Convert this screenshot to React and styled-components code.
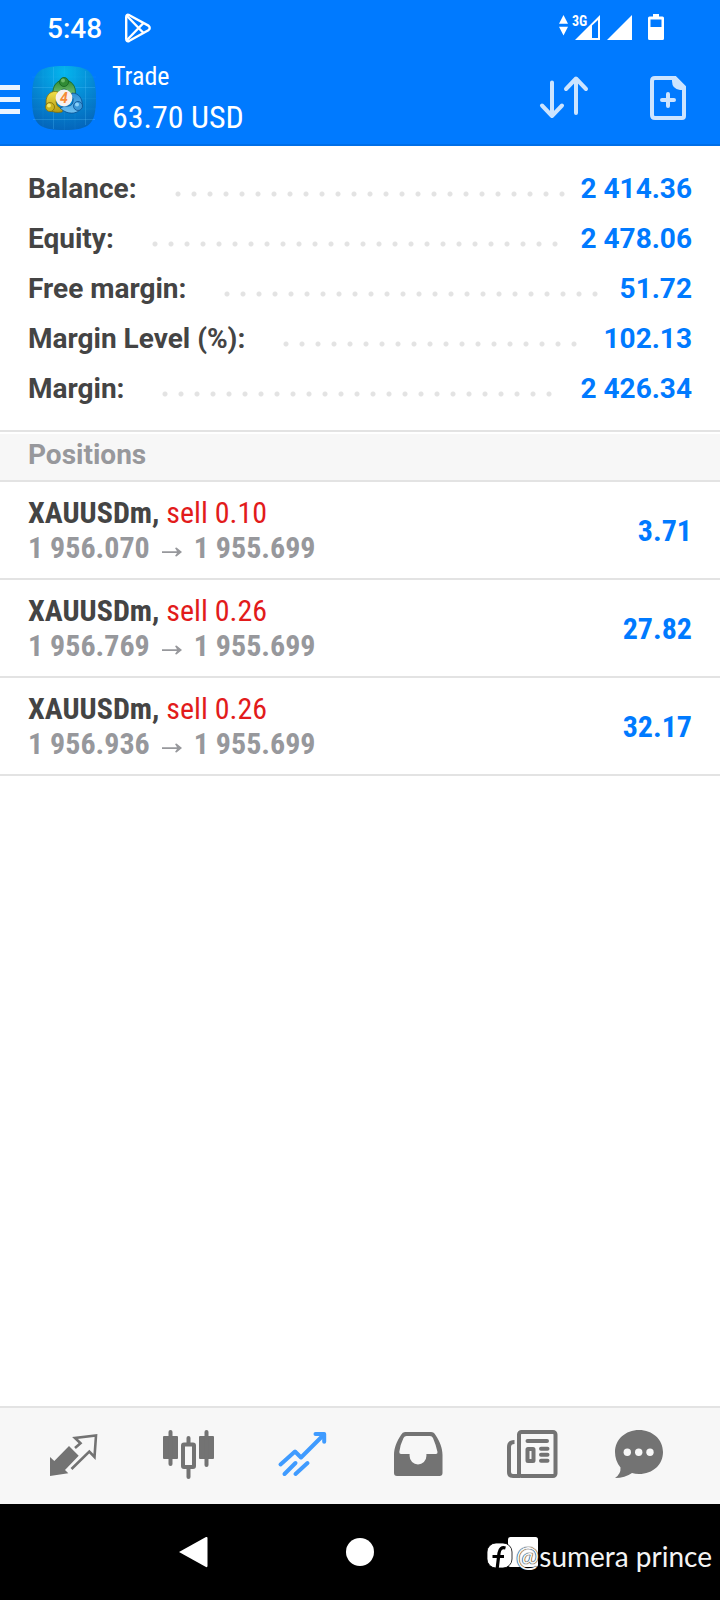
import styled, {createGlobalStyle} from "styled-components";

const GlobalStyle = createGlobalStyle`
  * {
    box-sizing: border-box;
  }
  body {
    margin: 0;
    background: #ffffff;
    font-family: Roboto, "Noto Sans", sans-serif;
  }
  button {
    padding: 0;
    border: none;
    background: none;
    cursor: pointer;
  }
  svg {
    display: block;
  }
`;

const Screen = styled.div`
  min-height: 100vh;
  display: flex;
  flex-direction: column;
`;

const Top = styled.header`
  background: #007aff;
  color: #ffffff;
  border-bottom: 2px solid #006fe8;
`;

const StatusBar = styled.div`
  height: 56px;
  padding: 0 55px 0 47px;
  display: flex;
  align-items: center;
  justify-content: space-between;
`;

const StatusGroup = styled.div`
  display: flex;
  align-items: center;
  gap: 22px;
`;

const Clock = styled.time`
  padding-top: 2px;
  font-size: 28px;
  font-weight: 500;
  line-height: 32px;
`;

const AppBar = styled.div`
  height: 88px;
  padding-right: 34px;
  display: flex;
  align-items: flex-start;
`;

const MenuButton = styled.button`
  width: 20px;
  height: 64px;
  margin: 11px 12px 0 0;
  display: flex;
  flex-direction: column;
  justify-content: center;
  gap: 7px;
`;

const MenuLine = styled.span`
  height: 5px;
  background: #eaf4ff;
`;

const Logo = styled.div`
  margin: 10px 16px 0 0;
`;

const Heading = styled.div`
  flex: 1;
  font-family: "Roboto Condensed", "Liberation Sans Narrow", Roboto, sans-serif;
`;

const Title = styled.h1`
  margin: 4px 0 0;
  font-size: 26px;
  font-weight: 400;
  line-height: 32px;
`;

const Profit = styled.p`
  margin: 5px 0 0;
  font-size: 32px;
  font-weight: 400;
  line-height: 40px;
`;

const Actions = styled.div`
  display: flex;
  gap: 61px;
  padding-top: 18px;
`;

const Summary = styled.dl`
  margin: 0;
  padding: 18px 28px 16px;
  border-bottom: 2px solid #e3e3e3;
`;

const SummaryRow = styled.div`
  display: flex;
  align-items: center;
  height: 50px;
  font-size: 28px;
  font-weight: 700;
  line-height: 32px;
`;

const Label = styled.dt`
  color: #444444;
`;

const Leader = styled.span`
  flex: 1;
  margin: 10px 8px 0 33px;
`;

// only whole dots are drawn
const Dots = styled.span`
  display: block;
  width: round(down, 100%, 16px);
  height: 6px;
  background: radial-gradient(circle, #e3e3e3 2px, transparent 3px) 0 0 / 16px 6px repeat-x;
`;

const Value = styled.dd`
  margin: 0;
  color: #007aff;
`;

const SectionTitle = styled.h2`
  margin: 2px 0 0;
  padding: 5px 28px 9px;
  background: #f7f7f7;
  border-bottom: 2px solid #e3e3e3;
  color: #97989c;
  font-size: 28px;
  font-weight: 700;
  line-height: 32px;
`;

const PositionList = styled.ul`
  flex: 1;
  margin: 0;
  padding: 0;
  list-style: none;
  font-family: "Roboto Condensed", "Liberation Sans Narrow", Roboto, sans-serif;
  font-size: 30px;
  font-weight: 700;
  line-height: 35px;
`;

const Position = styled.li`
  display: flex;
  align-items: center;
  justify-content: space-between;
  height: 98px;
  padding: 0 28px;
  border-bottom: 2px solid #e3e3e3;
`;

const Symbol = styled.div`
  color: #444444;
`;

const Side = styled.span`
  color: #e21b1b;
  font-weight: 400;
`;

const Prices = styled.div`
  display: flex;
  align-items: baseline;
  gap: 12px;
  color: #97989c;
`;

const Result = styled.div`
  color: #007aff;
`;

const TabBar = styled.nav`
  display: flex;
  align-items: center;
  justify-content: space-between;
  height: 98px;
  padding: 0 41px 0 42px;
  background: #f7f7f7;
  border-top: 2px solid #e3e3e3;
`;

const Tab = styled.button`
  color: ${(p) => (p.$active ? "#3f9bff" : "#737373")};
`;

const SystemBar = styled.footer`
  position: relative;
  display: flex;
  align-items: center;
  justify-content: center;
  gap: 110px;
  height: 96px;
  background: #000000;
`;

const Watermark = styled.div`
  position: absolute;
  right: 8px;
  bottom: 27px;
  display: flex;
  align-items: center;
  gap: 2px;
  color: #f4f4f4;
  font-family: Lato, sans-serif;
  font-size: 28px;
  line-height: 34px;
  text-shadow: 0 0 1px #000000, 0 0 1px #000000;
`;

const summary = [
    {label: "Balance:", value: "2 414.36"},
    {label: "Equity:", value: "2 478.06"},
    {label: "Free margin:", value: "51.72"},
    {label: "Margin Level (%):", value: "102.13"},
    {label: "Margin:", value: "2 426.34"},
];

const positions = [
    {id: 1, symbol: "XAUUSDm", side: "sell 0.10", open: "1 956.070", current: "1 955.699", profit: "3.71"},
    {id: 2, symbol: "XAUUSDm", side: "sell 0.26", open: "1 956.769", current: "1 955.699", profit: "27.82"},
    {id: 3, symbol: "XAUUSDm", side: "sell 0.26", open: "1 956.936", current: "1 955.699", profit: "32.17"},
];

const PlayIcon = () => (
    <svg width="28" height="30" viewBox="0 0 28 30" fill="none" stroke="#fff" strokeWidth="2.4" strokeLinejoin="round">
        <path d="M2.2 4.2Q2.2 0.8 5.4 2.2L24.4 12.6Q27 15 24.4 17.2L5.4 27.8Q2.2 29.2 2.2 25.8Z"/>
        <path d="M3 3L19.5 20M3 27L19.5 10"/>
    </svg>
);

const SignalIcons = () => (
    <svg width="106" height="28" viewBox="0 0 106 28" fill="#fff">
        <path d="M0 9.8L4.500 1L9 9.800ZM0 12.800L4.500 21.600L9 12.800Z"/>
        <text x="13" y="12" fontSize="14" fontWeight="700" fontFamily="Roboto Condensed, Liberation Sans Narrow, Roboto">3G</text>
        <path fillRule="evenodd" d="M16 26L41 1V26ZM33 11.500V24H39V6Z"/>
        <path d="M48 26L73 1V26Z"/>
        <path fillRule="evenodd" d="M94 0H100V2.500H103.500Q105 2.500 105 4V24.500Q105 26 103.500 26H90.500Q89 26 89 24.500V4Q89 2.500 90.500 2.500H94ZM91.500 5.500V13H102.500V5.500Z"/>
    </svg>
);

const LogoIcon = () => (
    <svg width="64" height="64" viewBox="0 0 64 64">
        <defs>
            <radialGradient id="tile" cx="0.5" cy="0.1" r="0.95">
                <stop offset="0" stopColor="#04b6ee"/>
                <stop offset="0.5" stopColor="#0589d4"/>
                <stop offset="1" stopColor="#0462b8"/>
            </radialGradient>
            <linearGradient id="green" x1="0" y1="0" x2="0" y2="1">
                <stop offset="0" stopColor="#2c8a32"/>
                <stop offset="1" stopColor="#7cc37a"/>
            </linearGradient>
            <linearGradient id="yellow" x1="0" y1="0" x2="0" y2="1">
                <stop offset="0" stopColor="#f0e04a"/>
                <stop offset="1" stopColor="#b39a12"/>
            </linearGradient>
            <linearGradient id="blue" x1="0" y1="0" x2="0" y2="1">
                <stop offset="0" stopColor="#2d8fd6"/>
                <stop offset="1" stopColor="#6fc1f2"/>
            </linearGradient>
        </defs>
        <path d="M0 32C0 6 6 0 32 0S64 6 64 32S58 64 32 64S0 58 0 32Z" fill="url(#tile)"/>
        <path d="M21.500 1V63M53.500 5V59M1 21.500H63M1 53.500H63" stroke="#5cc8ff" strokeOpacity="0.25"/>
        <path d="M11 3V61M32.500 0V64M43 1V63M0 11H64M0 32.500H64M0 43H64" stroke="#5cc8ff" strokeOpacity="0.08"/>
        <path d="M21 29C20 20 25 14 32 14S45 20 43 29L38 30Q36 23 32 23T26 30Z" fill="url(#green)" stroke="#15621f" strokeWidth="0.8"/>
        <path d="M26 26C20 24 14 28 14 36C14 43 20 48 30 46L32 42Q25 43 24 36Q24 31 27 30Z" fill="url(#yellow)" stroke="#7d6c0c" strokeWidth="0.8"/>
        <path d="M40 27C47 27 51 33 50 40C48 48 36 50 28 42L33 40Q40 41 41 36Q42 32 39 30Z" fill="url(#blue)" stroke="#0d4f90" strokeWidth="0.8"/>
        <circle cx="32" cy="16" r="4.500" fill="#318b35" stroke="#15621f" strokeWidth="0.8"/>
        <circle cx="31" cy="14.500" r="2" fill="#6dbb69"/>
        <circle cx="18" cy="41" r="4.500" fill="#c9b420" stroke="#7d6c0c" strokeWidth="0.8"/>
        <circle cx="17" cy="39.500" r="2" fill="#f3e96c"/>
        <circle cx="46" cy="40" r="4.500" fill="#3b97d8" stroke="#0d4f90" strokeWidth="0.8"/>
        <circle cx="45" cy="38.500" r="2" fill="#8bd0f8"/>
        <circle cx="32" cy="32" r="8.400" fill="#f6f1ee"/>
        <text x="32" y="37" textAnchor="middle" fontSize="14" fontWeight="700" fontStyle="italic" fill="#f58a35">4</text>
    </svg>
);

const SortIcon = () => (
    <svg width="52" height="48" viewBox="0 0 52 48" fill="none" stroke="#cce4ff" strokeWidth="4" strokeLinecap="round" strokeLinejoin="round">
        <path d="M15 8.500V42M5 31.500L15 42L25 31.500"/>
        <path d="M39 39V5M29 15L39 4.500L49 15"/>
    </svg>
);

const NewOrderIcon = () => (
    <svg width="36" height="48" viewBox="0 0 36 48" fill="none" stroke="#cce4ff" strokeWidth="4">
        <path d="M5 4H25L34 13V42Q34 44 32 44H5Q2 44 2 41V7Q2 4 5 4Z"/>
        <path d="M22 4H26L35 13V16H30Q22 15 22 7Z" fill="#cce4ff" stroke="none"/>
        <path d="M18 20V32M12 26H24" strokeLinecap="round"/>
    </svg>
);

const QuotesIcon = () => (
    <svg width="64" height="56" viewBox="0 0 64 56">
        <path d="M8 29L12.300 33L27 18L36.700 27.700L23 42L26.300 45.300L8 48Z" fill="currentColor"/>
        <path d="M33 20L38.500 15.200L33 10L54 7.500L52.500 29L47.300 23.500L29.500 41" fill="none" stroke="currentColor" strokeWidth="2.600"/>
    </svg>
);

const ChartIcon = () => (
    <svg width="64" height="56" viewBox="0 0 64 56" fill="currentColor">
        <rect x="6" y="8" width="15" height="23" rx="1"/>
        <rect x="11.500" y="2" width="4" height="36" rx="2"/>
        <rect x="42" y="8" width="15" height="23" rx="1"/>
        <rect x="47.500" y="2" width="4" height="37" rx="2"/>
        <rect x="29.500" y="8" width="4" height="9" rx="2"/>
        <rect x="29.500" y="39" width="4" height="12" rx="2"/>
        <rect x="26" y="16.500" width="11" height="22.500" rx="1" fill="none" stroke="currentColor" strokeWidth="4"/>
    </svg>
);

const TradeIcon = () => (
    <svg width="64" height="56" viewBox="0 0 64 56" fill="none" stroke="currentColor" strokeWidth="4" strokeLinecap="round" strokeLinejoin="round">
        <path d="M9.500 36.500L24 23.500L30 29.500L53 6.500"/>
        <path d="M44.500 6H53.200V13.700"/>
        <path d="M13.500 46L24.500 35M24.500 46L36.500 35"/>
    </svg>
);

const HistoryIcon = () => (
    <svg width="64" height="56" viewBox="0 0 64 56">
        <path fillRule="evenodd" fill="currentColor" d="M19 4H45Q48 4 49.500 7C54 14 56.500 20 56.500 27V45Q56.500 48 53.500 48H11Q8 48 8 45V27C8 20 10.500 14 15 7Q16.500 4 19 4ZM20.500 8Q18.500 8 17.500 10Q14 17 13.300 24Q13.200 26 15 26H23.600V28A8.400 8.400 0 0 0 40.400 28V26H50Q51.700 26 51.500 24Q50 17 47 10Q46 8 44 8Z"/>
    </svg>
);

const NewsIcon = () => (
    <svg width="64" height="56" viewBox="0 0 64 56" fill="none" stroke="currentColor" strokeWidth="4">
        <rect x="19" y="4" width="36.500" height="44" rx="2.500"/>
        <path d="M14.500 14Q9 14 9 19V44Q9 48 13 48H20"/>
        <path d="M27.500 13H47M41 20.800H47.500M41 26.800H47.500M41 32.800H47.500" strokeLinecap="round"/>
        <rect x="27.500" y="21" width="6" height="12" rx="0.500"/>
    </svg>
);

const ChatIcon = () => (
    <svg width="64" height="56" viewBox="0 0 64 56">
        <path fill="currentColor" d="M24 2C37.500 2 48 11.500 48 24S38 46 24 46Q20 46 17 45Q10 50 0 50Q6 46 5.500 39.500Q0 33 0 24C0 11.500 10.500 2 24 2Z"/>
        <circle cx="12.300" cy="24.300" r="3.700" fill="#f7f7f7"/>
        <circle cx="23.700" cy="24.300" r="3.700" fill="#f7f7f7"/>
        <circle cx="35" cy="24.300" r="3.700" fill="#f7f7f7"/>
    </svg>
);

const ArrowIcon = () => (
    <svg width="20" height="12" viewBox="0 0 20 12" fill="currentColor">
        <path d="M0 5.200H15L13 2L14.500 1.500L20 6L14.500 10.500L13 10L15 7H0Z"/>
    </svg>
);

const tabs = [
    {name: "Quotes", Icon: QuotesIcon},
    {name: "Charts", Icon: ChartIcon},
    {name: "Trade", Icon: TradeIcon},
    {name: "History", Icon: HistoryIcon},
    {name: "News", Icon: NewsIcon},
    {name: "Messages", Icon: ChatIcon},
];

const App = () => {
    return (
        <Screen>
            <GlobalStyle/>
            <Top>
                <StatusBar>
                    <StatusGroup>
                        <Clock>5:48</Clock>
                        <PlayIcon/>
                    </StatusGroup>
                    <SignalIcons/>
                </StatusBar>
                <AppBar>
                    <MenuButton aria-label="Menu">
                        <MenuLine/>
                        <MenuLine/>
                        <MenuLine/>
                    </MenuButton>
                    <Logo><LogoIcon/></Logo>
                    <Heading>
                        <Title>Trade</Title>
                        <Profit>63.70 USD</Profit>
                    </Heading>
                    <Actions>
                        <button aria-label="Sort"><SortIcon/></button>
                        <button aria-label="New order"><NewOrderIcon/></button>
                    </Actions>
                </AppBar>
            </Top>

            <Summary>
                {summary.map((item) => (
                    <SummaryRow key={item.label}>
                        <Label>{item.label}</Label>
                        <Leader><Dots/></Leader>
                        <Value>{item.value}</Value>
                    </SummaryRow>
                ))}
            </Summary>

            <SectionTitle>Positions</SectionTitle>
            <PositionList>
                {positions.map((p) => (
                    <Position key={p.id}>
                        <div>
                            <Symbol>{p.symbol}, <Side>{p.side}</Side></Symbol>
                            <Prices>
                                <span>{p.open}</span>
                                <ArrowIcon/>
                                <span>{p.current}</span>
                            </Prices>
                        </div>
                        <Result>{p.profit}</Result>
                    </Position>
                ))}
            </PositionList>

            <TabBar>
                {tabs.map(({name, Icon}) => (
                    <Tab key={name} aria-label={name} $active={name === "Trade"}>
                        <Icon/>
                    </Tab>
                ))}
            </TabBar>

            <SystemBar>
                <button aria-label="Back">
                    <svg width="56" height="56" viewBox="0 0 56 56"><path d="M13 28L40 13Q41.500 12.500 41.500 14V42Q41.500 43.500 40 43Z" fill="#fff"/></svg>
                </button>
                <button aria-label="Home">
                    <svg width="56" height="56" viewBox="0 0 56 56"><circle cx="28" cy="28" r="14" fill="#fff"/></svg>
                </button>
                <button aria-label="Recent apps">
                    <svg width="56" height="56" viewBox="0 0 56 56"><rect x="10" y="13" width="30" height="30" rx="2.500" fill="#fff"/></svg>
                </button>
                <Watermark>
                    <svg width="28" height="28" viewBox="0 0 28 28">
                        <rect x="1" y="1" width="25" height="25" rx="9" fill="#fff" stroke="#000" strokeWidth="0.800"/>
                        <path d="M19.500 6Q14 4.500 13 11L11 28M6.500 14.500H18" fill="none" stroke="#000" strokeWidth="3.200"/>
                    </svg>
                    <span>@sumera prince</span>
                </Watermark>
            </SystemBar>
        </Screen>
    );
};

export default App;
